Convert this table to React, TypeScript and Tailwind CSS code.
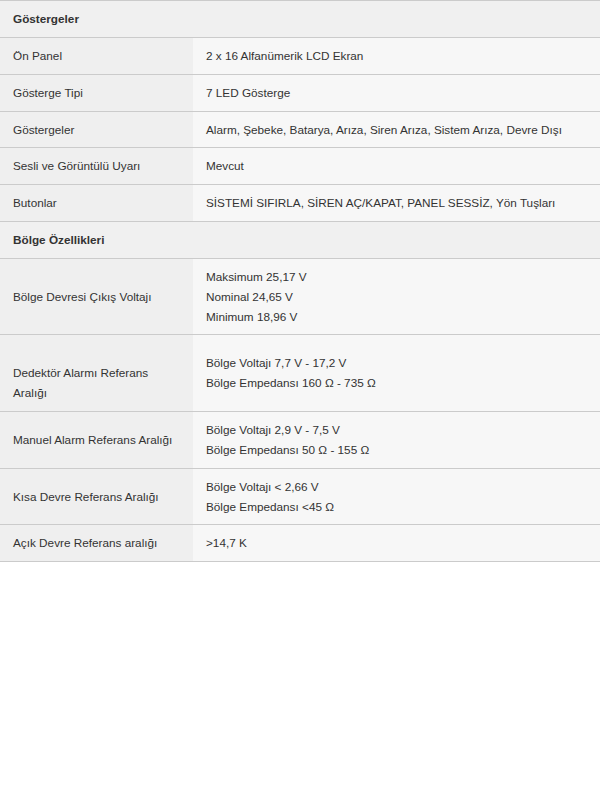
import React from 'react';

interface SpecRow {
  label: React.ReactNode;
  value?: React.ReactNode;
  header?: boolean;
}

const rows: SpecRow[] = [
  { label: 'Göstergeler', header: true },
  { label: 'Ön Panel', value: '2 x 16 Alfanümerik LCD Ekran' },
  { label: 'Gösterge Tipi', value: '7 LED Gösterge' },
  { label: 'Göstergeler', value: 'Alarm, Şebeke, Batarya, Arıza, Siren Arıza, Sistem Arıza, Devre Dışı' },
  { label: 'Sesli ve Görüntülü Uyarı', value: 'Mevcut' },
  { label: 'Butonlar', value: 'SİSTEMİ SIFIRLA, SİREN AÇ/KAPAT, PANEL SESSİZ, Yön Tuşları' },
  { label: 'Bölge Özellikleri', header: true },
  {
    label: 'Bölge Devresi Çıkış Voltajı',
    value: <>Maksimum 25,17 V<br />Nominal 24,65 V<br />Minimum 18,96 V</>
  },
  {
    label: <><br />Dedektör Alarmı Referans Aralığı</>,
    value: <>Bölge Voltajı 7,7 V - 17,2 V<br />Bölge Empedansı 160 Ω - 735 Ω</>
  },
  {
    label: 'Manuel Alarm Referans Aralığı',
    value: <>Bölge Voltajı 2,9 V - 7,5 V<br />Bölge Empedansı 50 Ω - 155 Ω</>
  },
  {
    label: 'Kısa Devre Referans Aralığı',
    value: <>Bölge Voltajı &lt; 2,66 V<br />Bölge Empedansı &lt;45 Ω</>
  },
  { label: 'Açık Devre Referans aralığı', value: '>14,7 K' }
];

export default function App() {
  return <div className="w-[600px] min-h-[800px] bg-white font-['Liberation_Sans',Arial,sans-serif] text-[11.75px] leading-[19.85px] text-[#333]">
      <table className="w-full border-collapse">
        <tbody>
          {rows.map((row, i) => row.header ? <tr key={i} className="border-y border-[#cbcbcb] bg-[#f0f0f0]">
                <td colSpan={2} className="px-[13px] py-2 font-bold">
                  {row.label}
                </td>
              </tr> : <tr key={i} className="border-y border-[#cbcbcb]">
                <td className="w-[193px] bg-[#efefef] px-[13px] py-2 align-middle">
                  {row.label}
                </td>
                <td className="bg-[#f7f7f7] px-[13px] py-2 align-middle">
                  {row.value}
                </td>
              </tr>)}
        </tbody>
      </table>
    </div>;
}
